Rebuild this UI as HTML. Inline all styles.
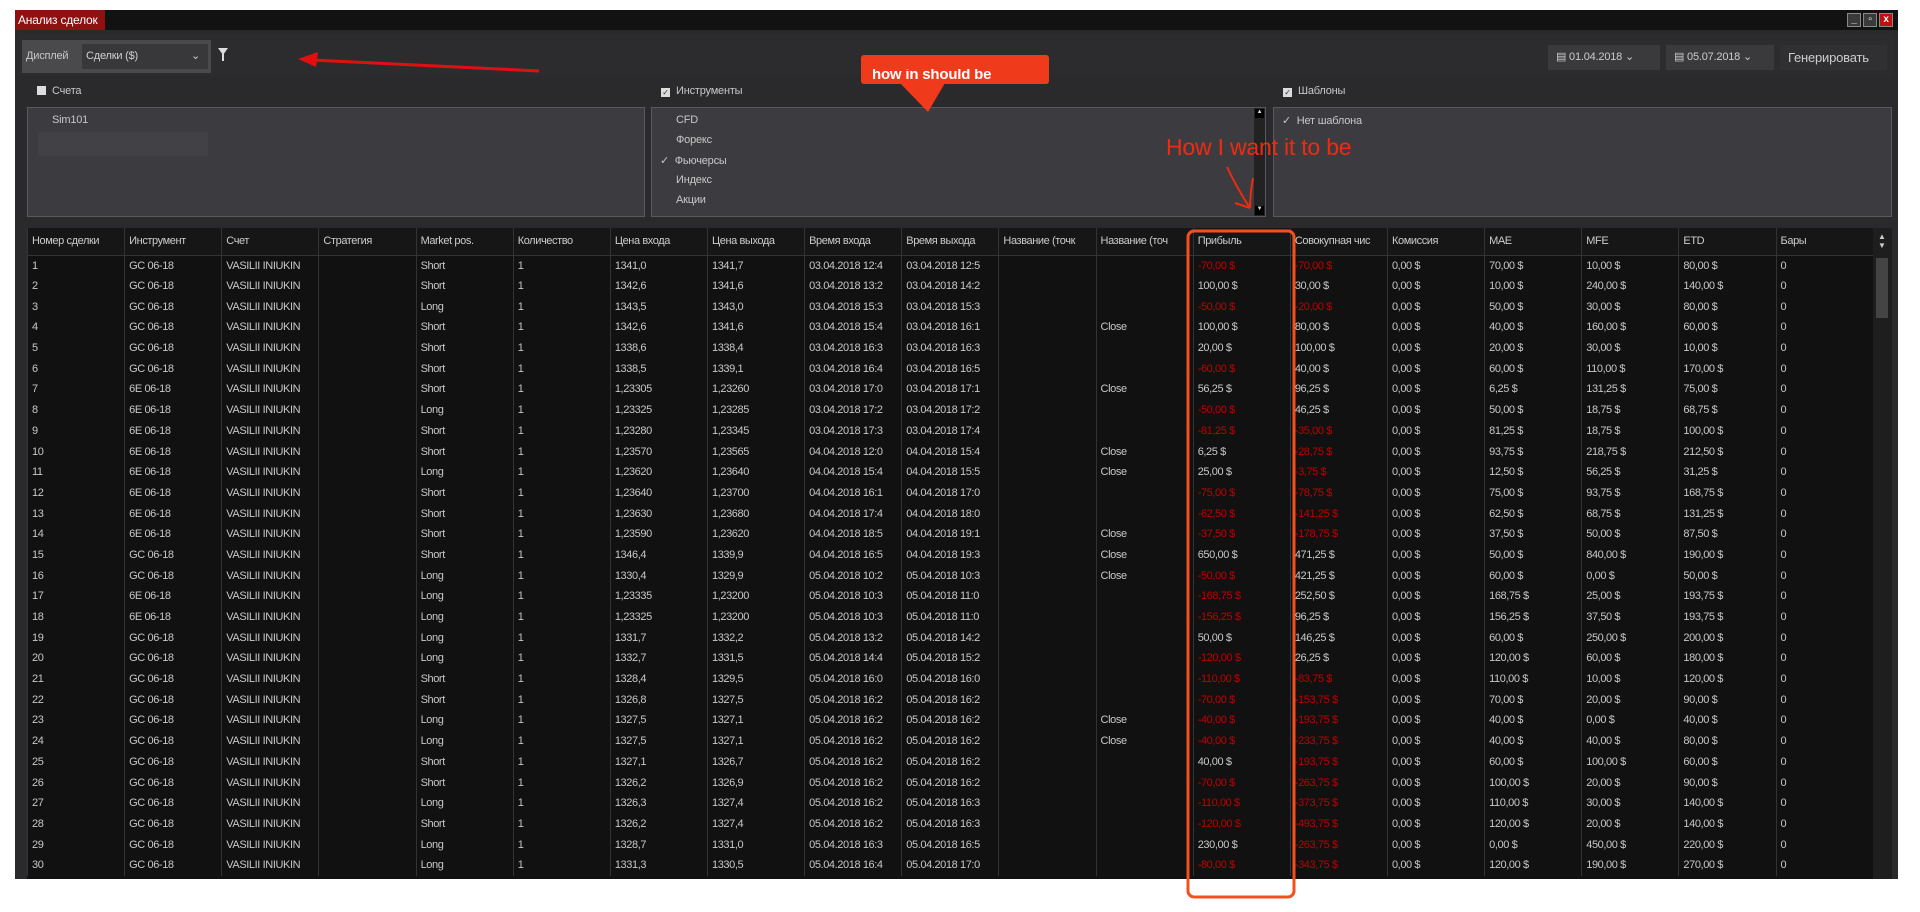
<!DOCTYPE html>
<html><head><meta charset="utf-8"><style>
*{box-sizing:border-box;margin:0;padding:0}
body{width:1920px;height:912px;background:#fff;position:relative;overflow:hidden;font-family:"Liberation Sans",sans-serif;font-size:11px;color:#c8c8c8;letter-spacing:-0.2px}
.abs{position:absolute}
#win{left:15px;top:10px;width:1883px;height:869px;background:#2a2a2c}
#title{left:15px;top:10px;width:1883px;height:20px;background:#121212}
#tab{left:15px;top:10px;width:90px;height:20px;background:#8e1010;color:#fff;font-size:12px;line-height:20px;padding-left:3px}
.wb{top:13px;width:14px;height:14px;background:#3a3a3a;border:1px solid #888;color:#fff;font-size:10px;line-height:12px;text-align:center;font-weight:bold}
#toolbar{left:18px;top:34px;width:1876px;height:42px;background:#2c2c2e}
#disp{left:22px;top:40px;width:189px;height:33px;background:#4a4a4c}
#disp span{position:absolute;top:10px}
#sel{left:82px;top:44px;width:126px;height:25px;background:#38383a;color:#d0d0d0;line-height:25px;padding-left:4px}
.lbl{top:85px;color:#c8c8c8}
.cb{display:inline-block;width:9px;height:9px;background:#ddd;margin-right:6px;vertical-align:-1px;font-size:8px;color:#333;line-height:9px;text-align:center}
.list{top:107px;height:110px;background:#3c3c40;border:1px solid #5a5a5e}
.li{position:absolute;color:#c8c8c8}
.date{top:45px;height:25px;background:#3a3a3c;line-height:25px;padding-left:8px;color:#ccc}
#tbl{left:27px;top:228px;width:1846px;height:651px;background:#111}
table{border-collapse:collapse;table-layout:fixed;width:1846px}
td,th{width:97.15px;overflow:hidden;white-space:nowrap;text-align:left;font-weight:normal;padding-left:4px;border-left:1px solid #333;letter-spacing:-0.4px}
th{height:27px;background:#161616;color:#ccc;border-bottom:1px solid #333}
td{height:20.7px}
.n{color:#c00000}
#sb{left:1873px;top:228px;width:19px;height:651px;background:#1e1e1e}
</style></head><body>
<div id="win" class="abs"></div>
<div id="title" class="abs"></div>
<div id="tab" class="abs">Анализ сделок</div>
<div class="abs wb" style="left:1847px">_</div>
<div class="abs wb" style="left:1863px">▫</div>
<div class="abs wb" style="left:1879px;background:#c01010">x</div>
<div id="toolbar" class="abs"></div>
<div id="disp" class="abs"><span style="left:4px">Дисплей</span></div>
<div id="sel" class="abs">Сделки ($)<span style="position:absolute;right:8px">⌄</span></div>
<div class="abs" style="left:218px;top:48px;width:0;height:0;border-left:5px solid transparent;border-right:5px solid transparent;border-top:7px solid #ddd"></div>
<div class="abs" style="left:222px;top:54px;width:2px;height:7px;background:#ddd"></div>
<div class="abs date" style="left:1548px;width:112px">▤ 01.04.2018 ⌄</div>
<div class="abs date" style="left:1666px;width:108px">▤ 05.07.2018 ⌄</div>
<div class="abs date" style="left:1780px;width:107px;font-size:13px;background:#303032">Генерировать</div>

<div class="abs lbl" style="left:37px"><span class="cb"></span>Счета</div>
<div class="abs lbl" style="left:661px"><span class="cb">✓</span>Инструменты</div>
<div class="abs lbl" style="left:1283px"><span class="cb">✓</span>Шаблоны</div>

<div class="abs list" style="left:27px;width:618px">
 <div class="li" style="left:24px;top:6px">Sim101</div>
 <div class="abs" style="left:10px;top:24px;width:170px;height:24px;background:#424246"></div>
</div>
<div class="abs list" style="left:651px;width:615px">
 <div class="li" style="left:24px;top:6px">CFD</div>
 <div class="li" style="left:24px;top:26px">Форекс</div>
 <div class="li" style="left:8px;top:46px">✓ &nbsp;Фьючерсы</div>
 <div class="li" style="left:24px;top:66px">Индекс</div>
 <div class="li" style="left:24px;top:86px">Акции</div>
 <div class="abs" style="left:602px;top:0;width:11px;height:108px;background:#222"></div>
 <div class="abs" style="left:603px;top:1px;width:9px;height:9px;background:#000;color:#ddd;font-size:6px;text-align:center">▲</div>
 <div class="abs" style="left:603px;top:98px;width:9px;height:9px;background:#000;color:#ddd;font-size:6px;text-align:center">▼</div>
</div>
<div class="abs list" style="left:1273px;width:619px">
 <div class="li" style="left:8px;top:6px">✓ &nbsp;Нет шаблона</div>
</div>

<div id="tbl" class="abs"><table>
<tr><th>Номер сделки</th><th>Инструмент</th><th>Счет</th><th>Стратегия</th><th>Market pos.</th><th>Количество</th><th>Цена входа</th><th>Цена выхода</th><th>Время входа</th><th>Время выхода</th><th>Название (точк</th><th>Название (точ</th><th>Прибыль</th><th>Совокупная чис</th><th>Комиссия</th><th>MAE</th><th>MFE</th><th>ETD</th><th>Бары</th></tr>
<tr><td>1</td><td>GC 06-18</td><td>VASILII INIUKIN</td><td></td><td>Short</td><td>1</td><td>1341,0</td><td>1341,7</td><td>03.04.2018 12:4</td><td>03.04.2018 12:5</td><td></td><td></td><td class="n">-70,00 $</td><td class="n">-70,00 $</td><td>0,00 $</td><td>70,00 $</td><td>10,00 $</td><td>80,00 $</td><td>0</td></tr>
<tr><td>2</td><td>GC 06-18</td><td>VASILII INIUKIN</td><td></td><td>Short</td><td>1</td><td>1342,6</td><td>1341,6</td><td>03.04.2018 13:2</td><td>03.04.2018 14:2</td><td></td><td></td><td>100,00 $</td><td>30,00 $</td><td>0,00 $</td><td>10,00 $</td><td>240,00 $</td><td>140,00 $</td><td>0</td></tr>
<tr><td>3</td><td>GC 06-18</td><td>VASILII INIUKIN</td><td></td><td>Long</td><td>1</td><td>1343,5</td><td>1343,0</td><td>03.04.2018 15:3</td><td>03.04.2018 15:3</td><td></td><td></td><td class="n">-50,00 $</td><td class="n">-20,00 $</td><td>0,00 $</td><td>50,00 $</td><td>30,00 $</td><td>80,00 $</td><td>0</td></tr>
<tr><td>4</td><td>GC 06-18</td><td>VASILII INIUKIN</td><td></td><td>Short</td><td>1</td><td>1342,6</td><td>1341,6</td><td>03.04.2018 15:4</td><td>03.04.2018 16:1</td><td></td><td>Close</td><td>100,00 $</td><td>80,00 $</td><td>0,00 $</td><td>40,00 $</td><td>160,00 $</td><td>60,00 $</td><td>0</td></tr>
<tr><td>5</td><td>GC 06-18</td><td>VASILII INIUKIN</td><td></td><td>Short</td><td>1</td><td>1338,6</td><td>1338,4</td><td>03.04.2018 16:3</td><td>03.04.2018 16:3</td><td></td><td></td><td>20,00 $</td><td>100,00 $</td><td>0,00 $</td><td>20,00 $</td><td>30,00 $</td><td>10,00 $</td><td>0</td></tr>
<tr><td>6</td><td>GC 06-18</td><td>VASILII INIUKIN</td><td></td><td>Short</td><td>1</td><td>1338,5</td><td>1339,1</td><td>03.04.2018 16:4</td><td>03.04.2018 16:5</td><td></td><td></td><td class="n">-60,00 $</td><td>40,00 $</td><td>0,00 $</td><td>60,00 $</td><td>110,00 $</td><td>170,00 $</td><td>0</td></tr>
<tr><td>7</td><td>6E 06-18</td><td>VASILII INIUKIN</td><td></td><td>Short</td><td>1</td><td>1,23305</td><td>1,23260</td><td>03.04.2018 17:0</td><td>03.04.2018 17:1</td><td></td><td>Close</td><td>56,25 $</td><td>96,25 $</td><td>0,00 $</td><td>6,25 $</td><td>131,25 $</td><td>75,00 $</td><td>0</td></tr>
<tr><td>8</td><td>6E 06-18</td><td>VASILII INIUKIN</td><td></td><td>Long</td><td>1</td><td>1,23325</td><td>1,23285</td><td>03.04.2018 17:2</td><td>03.04.2018 17:2</td><td></td><td></td><td class="n">-50,00 $</td><td>46,25 $</td><td>0,00 $</td><td>50,00 $</td><td>18,75 $</td><td>68,75 $</td><td>0</td></tr>
<tr><td>9</td><td>6E 06-18</td><td>VASILII INIUKIN</td><td></td><td>Short</td><td>1</td><td>1,23280</td><td>1,23345</td><td>03.04.2018 17:3</td><td>03.04.2018 17:4</td><td></td><td></td><td class="n">-81,25 $</td><td class="n">-35,00 $</td><td>0,00 $</td><td>81,25 $</td><td>18,75 $</td><td>100,00 $</td><td>0</td></tr>
<tr><td>10</td><td>6E 06-18</td><td>VASILII INIUKIN</td><td></td><td>Short</td><td>1</td><td>1,23570</td><td>1,23565</td><td>04.04.2018 12:0</td><td>04.04.2018 15:4</td><td></td><td>Close</td><td>6,25 $</td><td class="n">-28,75 $</td><td>0,00 $</td><td>93,75 $</td><td>218,75 $</td><td>212,50 $</td><td>0</td></tr>
<tr><td>11</td><td>6E 06-18</td><td>VASILII INIUKIN</td><td></td><td>Long</td><td>1</td><td>1,23620</td><td>1,23640</td><td>04.04.2018 15:4</td><td>04.04.2018 15:5</td><td></td><td>Close</td><td>25,00 $</td><td class="n">-3,75 $</td><td>0,00 $</td><td>12,50 $</td><td>56,25 $</td><td>31,25 $</td><td>0</td></tr>
<tr><td>12</td><td>6E 06-18</td><td>VASILII INIUKIN</td><td></td><td>Short</td><td>1</td><td>1,23640</td><td>1,23700</td><td>04.04.2018 16:1</td><td>04.04.2018 17:0</td><td></td><td></td><td class="n">-75,00 $</td><td class="n">-78,75 $</td><td>0,00 $</td><td>75,00 $</td><td>93,75 $</td><td>168,75 $</td><td>0</td></tr>
<tr><td>13</td><td>6E 06-18</td><td>VASILII INIUKIN</td><td></td><td>Short</td><td>1</td><td>1,23630</td><td>1,23680</td><td>04.04.2018 17:4</td><td>04.04.2018 18:0</td><td></td><td></td><td class="n">-62,50 $</td><td class="n">-141,25 $</td><td>0,00 $</td><td>62,50 $</td><td>68,75 $</td><td>131,25 $</td><td>0</td></tr>
<tr><td>14</td><td>6E 06-18</td><td>VASILII INIUKIN</td><td></td><td>Short</td><td>1</td><td>1,23590</td><td>1,23620</td><td>04.04.2018 18:5</td><td>04.04.2018 19:1</td><td></td><td>Close</td><td class="n">-37,50 $</td><td class="n">-178,75 $</td><td>0,00 $</td><td>37,50 $</td><td>50,00 $</td><td>87,50 $</td><td>0</td></tr>
<tr><td>15</td><td>GC 06-18</td><td>VASILII INIUKIN</td><td></td><td>Short</td><td>1</td><td>1346,4</td><td>1339,9</td><td>04.04.2018 16:5</td><td>04.04.2018 19:3</td><td></td><td>Close</td><td>650,00 $</td><td>471,25 $</td><td>0,00 $</td><td>50,00 $</td><td>840,00 $</td><td>190,00 $</td><td>0</td></tr>
<tr><td>16</td><td>GC 06-18</td><td>VASILII INIUKIN</td><td></td><td>Long</td><td>1</td><td>1330,4</td><td>1329,9</td><td>05.04.2018 10:2</td><td>05.04.2018 10:3</td><td></td><td>Close</td><td class="n">-50,00 $</td><td>421,25 $</td><td>0,00 $</td><td>60,00 $</td><td>0,00 $</td><td>50,00 $</td><td>0</td></tr>
<tr><td>17</td><td>6E 06-18</td><td>VASILII INIUKIN</td><td></td><td>Long</td><td>1</td><td>1,23335</td><td>1,23200</td><td>05.04.2018 10:3</td><td>05.04.2018 11:0</td><td></td><td></td><td class="n">-168,75 $</td><td>252,50 $</td><td>0,00 $</td><td>168,75 $</td><td>25,00 $</td><td>193,75 $</td><td>0</td></tr>
<tr><td>18</td><td>6E 06-18</td><td>VASILII INIUKIN</td><td></td><td>Long</td><td>1</td><td>1,23325</td><td>1,23200</td><td>05.04.2018 10:3</td><td>05.04.2018 11:0</td><td></td><td></td><td class="n">-156,25 $</td><td>96,25 $</td><td>0,00 $</td><td>156,25 $</td><td>37,50 $</td><td>193,75 $</td><td>0</td></tr>
<tr><td>19</td><td>GC 06-18</td><td>VASILII INIUKIN</td><td></td><td>Long</td><td>1</td><td>1331,7</td><td>1332,2</td><td>05.04.2018 13:2</td><td>05.04.2018 14:2</td><td></td><td></td><td>50,00 $</td><td>146,25 $</td><td>0,00 $</td><td>60,00 $</td><td>250,00 $</td><td>200,00 $</td><td>0</td></tr>
<tr><td>20</td><td>GC 06-18</td><td>VASILII INIUKIN</td><td></td><td>Long</td><td>1</td><td>1332,7</td><td>1331,5</td><td>05.04.2018 14:4</td><td>05.04.2018 15:2</td><td></td><td></td><td class="n">-120,00 $</td><td>26,25 $</td><td>0,00 $</td><td>120,00 $</td><td>60,00 $</td><td>180,00 $</td><td>0</td></tr>
<tr><td>21</td><td>GC 06-18</td><td>VASILII INIUKIN</td><td></td><td>Short</td><td>1</td><td>1328,4</td><td>1329,5</td><td>05.04.2018 16:0</td><td>05.04.2018 16:0</td><td></td><td></td><td class="n">-110,00 $</td><td class="n">-83,75 $</td><td>0,00 $</td><td>110,00 $</td><td>10,00 $</td><td>120,00 $</td><td>0</td></tr>
<tr><td>22</td><td>GC 06-18</td><td>VASILII INIUKIN</td><td></td><td>Short</td><td>1</td><td>1326,8</td><td>1327,5</td><td>05.04.2018 16:2</td><td>05.04.2018 16:2</td><td></td><td></td><td class="n">-70,00 $</td><td class="n">-153,75 $</td><td>0,00 $</td><td>70,00 $</td><td>20,00 $</td><td>90,00 $</td><td>0</td></tr>
<tr><td>23</td><td>GC 06-18</td><td>VASILII INIUKIN</td><td></td><td>Long</td><td>1</td><td>1327,5</td><td>1327,1</td><td>05.04.2018 16:2</td><td>05.04.2018 16:2</td><td></td><td>Close</td><td class="n">-40,00 $</td><td class="n">-193,75 $</td><td>0,00 $</td><td>40,00 $</td><td>0,00 $</td><td>40,00 $</td><td>0</td></tr>
<tr><td>24</td><td>GC 06-18</td><td>VASILII INIUKIN</td><td></td><td>Long</td><td>1</td><td>1327,5</td><td>1327,1</td><td>05.04.2018 16:2</td><td>05.04.2018 16:2</td><td></td><td>Close</td><td class="n">-40,00 $</td><td class="n">-233,75 $</td><td>0,00 $</td><td>40,00 $</td><td>40,00 $</td><td>80,00 $</td><td>0</td></tr>
<tr><td>25</td><td>GC 06-18</td><td>VASILII INIUKIN</td><td></td><td>Short</td><td>1</td><td>1327,1</td><td>1326,7</td><td>05.04.2018 16:2</td><td>05.04.2018 16:2</td><td></td><td></td><td>40,00 $</td><td class="n">-193,75 $</td><td>0,00 $</td><td>60,00 $</td><td>100,00 $</td><td>60,00 $</td><td>0</td></tr>
<tr><td>26</td><td>GC 06-18</td><td>VASILII INIUKIN</td><td></td><td>Short</td><td>1</td><td>1326,2</td><td>1326,9</td><td>05.04.2018 16:2</td><td>05.04.2018 16:2</td><td></td><td></td><td class="n">-70,00 $</td><td class="n">-263,75 $</td><td>0,00 $</td><td>100,00 $</td><td>20,00 $</td><td>90,00 $</td><td>0</td></tr>
<tr><td>27</td><td>GC 06-18</td><td>VASILII INIUKIN</td><td></td><td>Long</td><td>1</td><td>1326,3</td><td>1327,4</td><td>05.04.2018 16:2</td><td>05.04.2018 16:3</td><td></td><td></td><td class="n">-110,00 $</td><td class="n">-373,75 $</td><td>0,00 $</td><td>110,00 $</td><td>30,00 $</td><td>140,00 $</td><td>0</td></tr>
<tr><td>28</td><td>GC 06-18</td><td>VASILII INIUKIN</td><td></td><td>Short</td><td>1</td><td>1326,2</td><td>1327,4</td><td>05.04.2018 16:2</td><td>05.04.2018 16:3</td><td></td><td></td><td class="n">-120,00 $</td><td class="n">-493,75 $</td><td>0,00 $</td><td>120,00 $</td><td>20,00 $</td><td>140,00 $</td><td>0</td></tr>
<tr><td>29</td><td>GC 06-18</td><td>VASILII INIUKIN</td><td></td><td>Long</td><td>1</td><td>1328,7</td><td>1331,0</td><td>05.04.2018 16:3</td><td>05.04.2018 16:5</td><td></td><td></td><td>230,00 $</td><td class="n">-263,75 $</td><td>0,00 $</td><td>0,00 $</td><td>450,00 $</td><td>220,00 $</td><td>0</td></tr>
<tr><td>30</td><td>GC 06-18</td><td>VASILII INIUKIN</td><td></td><td>Long</td><td>1</td><td>1331,3</td><td>1330,5</td><td>05.04.2018 16:4</td><td>05.04.2018 17:0</td><td></td><td></td><td class="n">-80,00 $</td><td class="n">-343,75 $</td><td>0,00 $</td><td>120,00 $</td><td>190,00 $</td><td>270,00 $</td><td>0</td></tr>
</table></div>
<div id="sb" class="abs">
 <div class="abs" style="left:5px;top:4px;color:#ccc;font-size:8px">▲<br>▼</div>
 <div class="abs" style="left:3px;top:30px;width:12px;height:60px;background:#444"></div>
</div>

<svg class="abs" style="left:0;top:0" width="1920" height="912">
 <defs><clipPath id="cp"><rect x="861" y="69" width="188" height="20"/></clipPath></defs>
 <line x1="539" y1="71" x2="312" y2="60" stroke="#e01010" stroke-width="3"/>
 <polygon points="298,59 318,52 316,67" fill="#e01010"/>
 <rect x="861" y="55" width="188" height="29" rx="3" fill="#f03a1c"/>
 <polygon points="900,83 945,83 928,112" fill="#f03a1c"/>
 <text x="872" y="79" fill="#fff" font-family="Liberation Sans" font-size="15" font-weight="bold" clip-path="url(#cp)">how in should be</text>
 <text x="1166" y="155" fill="#f02a10" font-family="Liberation Sans" font-size="23">How I want it to be</text>
 <path d="M1227 167 Q1238 190 1250 208 M1253 178 Q1250 195 1250 208 M1235 203 L1250 208" stroke="#f02a10" stroke-width="2" fill="none"/>
 <rect x="1188" y="231" width="106" height="666" rx="6" fill="none" stroke="#f4501f" stroke-width="3"/>
</svg>
</body></html>
